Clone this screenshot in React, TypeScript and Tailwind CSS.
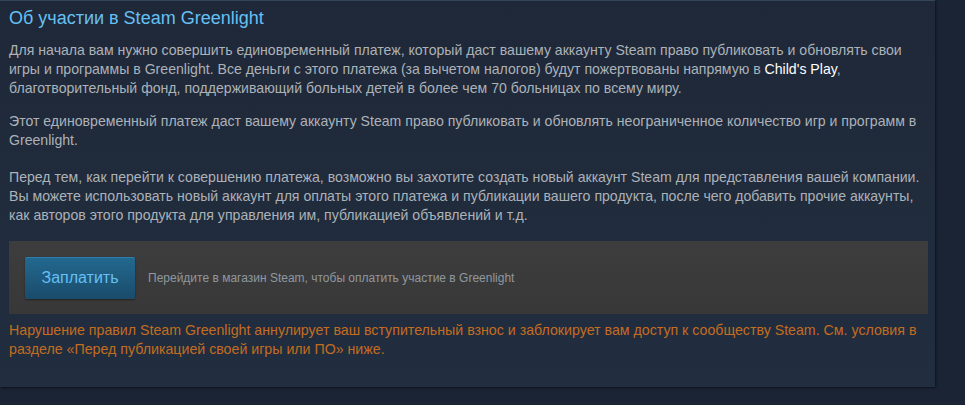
import React from "react";

// Greenlight fee notice panel

function Lines({ lines }: { lines: React.ReactNode[] }) {
  return (
    <>
      {lines.map((l, i) => (
        <span key={i} className="block whitespace-nowrap">
          {l}
        </span>
      ))}
    </>
  );
}

export default function App() {
  return (
    <div className="h-[405px] w-[965px] overflow-hidden bg-[#1b2434] font-['Liberation_Sans',Arial,sans-serif]">
      <div className="w-[935px] border-t border-[#34455a] bg-gradient-to-b from-[#1f2838] to-[#212e40] pb-[28px] shadow-[1px_1px_2px_rgba(0,0,0,0.5)]">
        {/* Header */}
        <h2 className="px-[9px] pt-[5px] text-[18px] leading-[24px] text-[#66c0f4]">
          Об участии в Steam Greenlight
        </h2>

        <div className="px-[9px] pt-[11px] text-[14.1px] leading-[19px] text-[#acb2b8]">
          <p>
            <Lines
              lines={[
                "Для начала вам нужно совершить единовременный платеж, который даст вашему аккаунту Steam право публиковать и обновлять свои",
                <>
                  игры и программы в Greenlight. Все деньги с этого платежа (за вычетом налогов) будут пожертвованы напрямую в{" "}
                  <span className="text-white">Child's Play</span>,
                </>,
                "благотворительный фонд, поддерживающий больных детей в более чем 70 больницах по всему миру.",
              ]}
            />
          </p>
          <p className="mt-[14px]">
            <Lines
              lines={[
                "Этот единовременный платеж даст вашему аккаунту Steam право публиковать и обновлять неограниченное количество игр и программ в",
                "Greenlight.",
              ]}
            />
          </p>
          <p className="mt-[18px]">
            <Lines
              lines={[
                "Перед тем, как перейти к совершению платежа, возможно вы захотите создать новый аккаунт Steam для представления вашей компании.",
                "Вы можете использовать новый аккаунт для оплаты этого платежа и публикации вашего продукта, после чего добавить прочие аккаунты,",
                "как авторов этого продукта для управления им, публикацией объявлений и т.д.",
              ]}
            />
          </p>
        </div>

        {/* Purchase box */}
        <div className="mx-[9px] mt-[16px] flex h-[73px] w-[919px] items-center bg-gradient-to-b from-[#3d3d3d] to-[#383838] pl-[16px]">
          <button className="h-[42px] w-[110px] rounded-[2px] border-t border-[#2e7fae] bg-gradient-to-b from-[#22698f] to-[#1a4b6b] text-[16px] text-[#66c0f4] shadow-[0_1px_2px_rgba(0,0,0,0.4)]">
            Заплатить
          </button>
          <span className="ml-[13px] text-[12px] text-[#8f98a0]">
            Перейдите в магазин Steam, чтобы оплатить участие в Greenlight
          </span>
        </div>

        {/* Warning */}
        <p className="px-[9px] pt-[7px] text-[14.2px] leading-[19px] text-[#c46c20]">
          <Lines
            lines={[
              "Нарушение правил Steam Greenlight аннулирует ваш вступительный взнос и заблокирует вам доступ к сообществу Steam. См. условия в",
              "разделе «Перед публикацией своей игры или ПО» ниже.",
            ]}
          />
        </p>
      </div>
    </div>
  );
}
